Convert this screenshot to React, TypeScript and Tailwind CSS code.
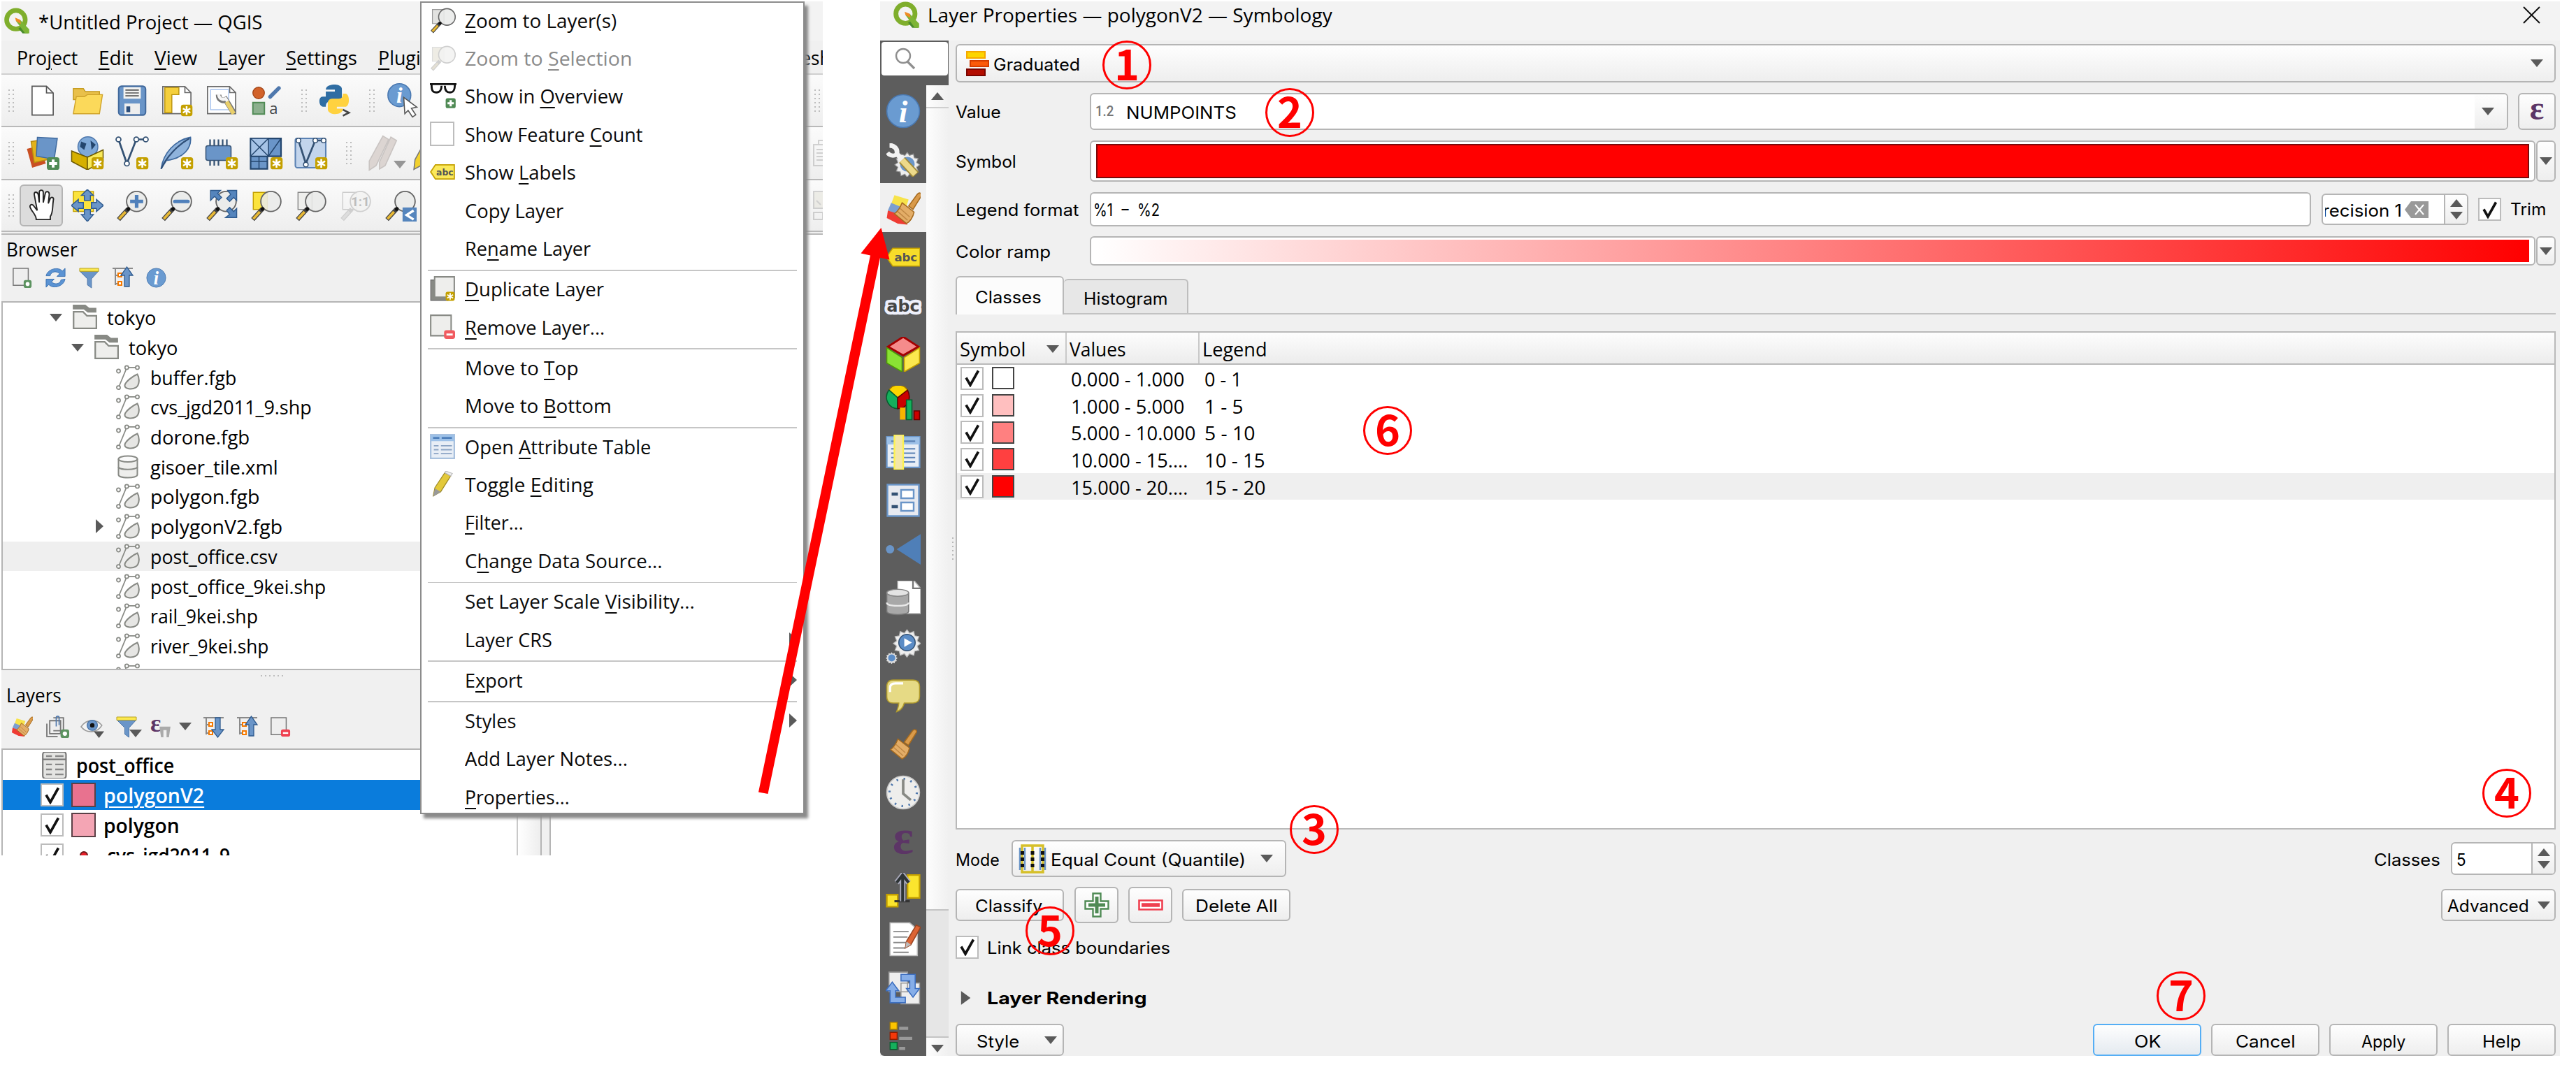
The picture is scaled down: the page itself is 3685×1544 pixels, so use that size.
import React, { useLayoutEffect, useRef, useState } from "react";

/* ---------- text helpers ---------- */

type TProps = { w: number; children: React.ReactNode; className?: string };

// A single line of text fitted to a given width.
function Fit({ w, children, className = "" }: TProps) {
  const ref = useRef<HTMLSpanElement>(null);
  const [k, setK] = useState(1);
  useLayoutEffect(() => {
    if (ref.current) setK(w / ref.current.offsetWidth);
  }, [w]);
  return (
    <span className={"inline-block shrink-0 whitespace-nowrap " + className} style={{ width: w }}>
      <span ref={ref} className="inline-block origin-left" style={{ transform: `scaleX(${k})` }}>
        {children}
      </span>
    </span>
  );
}

const Sg = (p: TProps) => (
  <Fit w={p.w} className={"font-['Open_Sans','Noto_Sans',sans-serif] text-[28px] leading-[38px] " + (p.className ?? "")}>
    {p.children}
  </Fit>
);
const Ui = (p: TProps) => (
  <Fit w={p.w} className={"font-['Inter','Noto_Sans_CJK_JP',sans-serif] text-[24px] leading-[30px] " + (p.className ?? "")}>
    {p.children}
  </Fit>
);

// "&" marks the mnemonic letter that is underlined.
function mnemonic(s: string) {
  const i = s.indexOf("&");
  if (i < 0) return s;
  return (
    <>
      {s.slice(0, i)}
      <span className="underline decoration-2 underline-offset-[5px]">{s[i + 1]}</span>
      {s.slice(i + 2)}
    </>
  );
}

/* ---------- small shapes ---------- */

const Svg = ({ s = 46, children, className = "" }: { s?: number; children?: React.ReactNode; className?: string }) => (
  <svg width={s} height={s} viewBox="0 0 32 32" fill="none" className={"shrink-0 " + className}>
    {children}
  </svg>
);
const Down = ({ className = "" }: { className?: string }) => (
  <svg width="18" height="11" viewBox="0 0 18 11" className={"shrink-0 " + className}>
    <path d="M0 0h18L9 11z" fill="#5a5a5a" />
  </svg>
);
const Up = () => (
  <svg width="18" height="11" viewBox="0 0 18 11" className="shrink-0">
    <path d="M0 11h18L9 0z" fill="#5a5a5a" />
  </svg>
);
const Right = ({ className = "" }: { className?: string }) => (
  <svg width="11" height="20" viewBox="0 0 11 20" className={"shrink-0 " + className}>
    <path d="M0 0v20L11 10z" fill="#5a5a5a" />
  </svg>
);
const Check = () => (
  <span className="flex h-[33px] w-[33px] shrink-0 items-center justify-center border-2 border-[#bcbcbc] bg-white">
    <svg width="24" height="26" viewBox="0 0 24 26">
      <path d="M3 12.5 9 23 20.5 2.5" fill="none" stroke="#111" strokeWidth="3.6" />
    </svg>
  </span>
);
const Grip = ({ className = "" }: { className?: string }) => (
  <span className={"grid shrink-0 grid-cols-2 gap-x-[4px] gap-y-[4px] " + className}>
    {Array.from({ length: 12 }, (_, i) => (
      <i key={i} className="h-[2px] w-[2px] bg-[#bdbdbd]" />
    ))}
  </span>
);
const Cell = ({ children }: { children: React.ReactNode }) => (
  <span className="flex w-16 shrink-0 items-center justify-center">{children}</span>
);

/* ---------- icon pieces ---------- */

const Star = () => (
  <g>
    <rect x="20" y="20" width="11.5" height="11.5" rx="2.4" fill="#c4a000" />
    <path d="M25.7 21.6v8.4M22 23.8l7.4 4.2M29.4 23.8 22 28" stroke="#fff" strokeWidth="1.7" />
  </g>
);
const PlusTag = ({ x = 20, y = 20 }: { x?: number; y?: number }) => (
  <g transform={`translate(${x} ${y})`}>
    <rect width="12" height="12" rx="2.4" fill="#4f8a54" />
    <path d="M6 2.2v7.6M2.2 6h7.6" stroke="#fff" strokeWidth="2.6" />
  </g>
);
const Lens = ({ handle = "#e8b935", dim = false }: { handle?: string; dim?: boolean }) => (
  <g>
    <path d="M12 19.5 2.5 30" stroke={dim ? "#cfcfcf" : "#444"} strokeWidth="4.4" />
    <path d="M9.5 22.3 3 29.4" stroke={handle} strokeWidth="2.6" />
    <circle cx="20.5" cy="12" r="10" fill={dim ? "#f3f3f1" : "#e9ebe9"} fillOpacity=".88" stroke={dim ? "#cfcfcf" : "#666"} strokeWidth="1.3" />
    {!dim && <circle cx="12.2" cy="19.5" r="1.9" fill="#111" />}
  </g>
);
const Info = ({ s }: { s: number }) => (
  <Svg s={s}>
    <circle cx="16" cy="16" r="15" fill="#6a9bd1" stroke="#4a78b0" />
    <text x="16" y="26.5" textAnchor="middle" fontFamily="Liberation Serif, serif" fontStyle="italic" fontWeight="700" fontSize="29" fill="#fff">i</text>
  </Svg>
);
const Epsilon = ({ className = "" }: { className?: string }) => (
  <span className={"font-['Liberation_Serif',serif] font-bold text-[#5c3566] " + className}>ε</span>
);
const QLogo = ({ s }: { s: number }) => (
  <Svg s={s}>
    <circle cx="15" cy="14.5" r="11.2" stroke="#7fae2c" strokeWidth="5.6" />
    <path d="M22 22.5 30 31H23l-5-6z" fill="#4a8b2c" />
    <path d="m15 16 5-1.5L31 26v5h-5z" fill="#7db535" />
    <path d="m14 12 6 2.5 1 5-6-3.5z" fill="#f08a24" />
  </Svg>
);
const Funnel = ({ s = 30 }: { s?: number }) => (
  <Svg s={s}>
    <path d="M2 6h28L19.5 17.5V31l-6-4.5V17.5z" fill="#6a95c8" stroke="#4a75a8" />
    <path d="M2 2h28v4.5H2z" fill="#fce94f" stroke="#b7a020" />
  </Svg>
);
const TreeArrow = ({ down = false }: { down?: boolean }) => (
  <Svg s={32}>
    <path d="M1 3h29M5 3v24M5 13h7M5 25h7" stroke="#8a8a8a" strokeWidth="2" />
    <path d="M9 10h5v5H9zM9 22h5v5H9z" fill="#fff" stroke="#f57900" strokeWidth="2" />
    <path d={down ? "M18 3h7v17h5l-8.500 11L13 20h5z" : "M18 29h7V13h5L21.500 1 13 13h5z"} fill="#6a95c8" stroke="#2f5b8f" strokeWidth="1.3" />
  </Svg>
);
const FileVec = () => (
  <Svg s={36}>
    <g stroke="#888a85" strokeWidth="1.5">
      <path d="M4.500 28 14 5M17 3.500h9" />
      <circle cx="4" cy="8" r="2.300" fill="#fff" />
      <circle cx="4" cy="29" r="2.300" fill="#fff" />
      <circle cx="14.500" cy="3.500" r="2.300" fill="#fff" />
      <circle cx="28" cy="3.500" r="2.300" fill="#fff" />
      <path d="M28 12c-5 2-15 9-16 14-.5 5 9 6 14 3 5-3 5-12 2-17z" fill="#e6e6e4" strokeWidth="1.800" />
    </g>
  </Svg>
);
const FileDb = () => (
  <Svg s={36}>
    <path d="M4 6v20c0 5 24 5 24 0V6" fill="#eeeeec" stroke="#888a85" strokeWidth="1.800" />
    <ellipse cx="16" cy="6" rx="12" ry="3.800" fill="#fafafa" stroke="#888a85" strokeWidth="1.800" />
    <path d="M4 16c0 4.500 24 4.500 24 0" stroke="#888a85" strokeWidth="1.800" />
  </Svg>
);
const Folder = () => (
  <Svg s={36}>
    <path d="M1 0h16l5 4h9v6H20l-5-4H1z" fill="#888a85" />
    <path d="M2 9h12l5 5h12v16H2z" fill="#eeeeec" stroke="#888a85" strokeWidth="2" />
  </Svg>
);
const Page = ({ children }: { children?: React.ReactNode }) => (
  <>
    <path d="M2 2h22l6 6v21H2z" fill="#fff" stroke="#6b6b6b" strokeWidth="1.200" />
    <path d="M24 2v6h6" stroke="#6b6b6b" strokeWidth="1.200" />
    {children}
  </>
);
const Brush = ({ palette = true }: { palette?: boolean }) => (
  <>
    {palette && (
      <>
        <path d="M8 4l13 4-3 9L5 12z" fill="#f7e34a" />
        <path d="M5 11l12 5-3 7L2 18z" fill="#7b9fd0" />
        <path d="M2 18l12 4 6 9-9-1L1 25z" fill="#ef3b33" />
      </>
    )}
    <path d="m21 14 8-11c2-2 5-.5 3.500 2L25 17z" fill="#d99a4a" stroke="#a56a1f" />
    <path d="M15 11 26 19.500c-1 5-4 9-7 10.500L8 21c3-2 5-5 7-10z" fill="#e3ad67" stroke="#a56a1f" />
    <path d="m11 19 9 8M13 16l9 8" stroke="#c08845" />
  </>
);

/* ---------- toolbars ---------- */

const rowOne = [
  <Svg s={44}><path d="M5 1h15l7 7v23H5z" fill="#fff" stroke="#555" strokeWidth="1.200" /><path d="M20 1v7h7" stroke="#555" strokeWidth="1.200" /></Svg>,
  <Svg s={46}><path d="M2 4h10l2 3h14v8H2z" fill="#e9c04a" stroke="#c59b1f" /><path d="M2 29 5 12h8l3-2h15l-3 19z" fill="#fbd95a" stroke="#d0a42a" /></Svg>,
  <Svg s={44}><rect x="2" y="1" width="28" height="30" rx="3" fill="#6a95c8" stroke="#41699c" strokeWidth="1.500" /><path d="M7 2h18v12H7z" fill="#f3f3f1" /><path d="M9 5h14M9 8h14M9 11h14" stroke="#555" strokeWidth="1.200" /><path d="M8 19h16v11H8z" fill="#eee" /><path d="M10 22h4v6h-4z" fill="#2b4d7a" /></Svg>,
  <Svg s={46}><Page /><path d="M4 3h14v7h-7v18H4z" fill="#f5cf3c" stroke="#b9930f" /><Star /></Svg>,
  <Svg s={46}><Page><path d="M5 5h18v20H5z" stroke="#a9c4ee" /></Page><path d="M13 10c0 5 4 7 7 5l8 13" stroke="#777" strokeWidth="5.500" /><path d="M13 9c0 5 4 7 7 5l2 3" stroke="#f5f5f5" strokeWidth="3" /><path d="m21 17 7 12" stroke="#e9cf6a" strokeWidth="4" /></Svg>,
  <Svg s={44}><circle cx="8" cy="8" r="6" fill="#d2622a" stroke="#a5481a" /><path d="M20 12 29 3" stroke="#4f78ad" strokeWidth="4" strokeLinecap="round" /><path d="M2 18h12v12H2z" fill="#8cb08e" stroke="#4f8a54" strokeWidth="1.400" /><text x="19" y="30" fontFamily="Open Sans, sans-serif" fontSize="16" fill="#444">a</text></Svg>,
];
const python = (
  <Svg s={46}>
    <path d="M8 14V9h9V7h-9c0-6 15-7 16-1v9c0 3-2 4-4 4h-8c-3 0-4 2-4 5H5c-4 0-5-10 0-10z" fill="#2f6da3" transform="translate(-1 -2)" />
    <path d="M25 9h3c4 1 4 12 0 13h-9v2h6c0 7-14 7-15 1v-7c0-2 2-4 4-4h7c3 0 4-2 4-5z" fill="#ffd23f" transform="translate(-1 0)" />
    <path d="m24 25 6 3-6 3" stroke="#444" strokeWidth="1.800" />
  </Svg>
);
const identify = (
  <Svg s={50}>
    <circle cx="13" cy="11" r="10.500" fill="#6a9bd1" stroke="#4a78b0" />
    <text x="13" y="18" textAnchor="middle" fontFamily="Liberation Serif, serif" fontStyle="italic" fontWeight="700" fontSize="20" fill="#fff">i</text>
    <path d="m17 13 12 9-5 1 4 6-3 2-4-6-3 3z" fill="#fff" stroke="#555" />
  </Svg>
);
const rowTwo = [
  <Svg s={48}><path d="m1 12 12-3 6 17-13 4z" fill="#c94f22" /><path d="m5 5 13-2 4 19-14 3z" fill="#e3b21a" stroke="#b98a10" /><path d="m11 1 19 1-3 20-17-3z" fill="#6a95c8" stroke="#3f6a9f" /><PlusTag x={20} y={20} /></Svg>,
  <Svg s={48}><circle cx="16.500" cy="10" r="9.500" fill="#7fa9d8" stroke="#4f78ad" /><path d="M10 5l5 2-2 6-4-3zM19 4l5 4-4 5z" fill="#24466e" /><path d="M1 14 16 20v12L1 24z" fill="#d6b000" stroke="#6e5a00" /><path d="m16 20 15-7v11l-15 8z" fill="#f8e95a" stroke="#6e5a00" /><Star /></Svg>,
  <Svg s={48}><path d="M3 3l8 23 9-23h9" stroke="#345274" strokeWidth="1.800" /><g fill="#fff" stroke="#345274" strokeWidth="1.200"><circle cx="3" cy="3" r="2.300" /><circle cx="20" cy="3" r="2.300" /><circle cx="29" cy="3" r="2.300" /><circle cx="11" cy="26" r="2.300" /></g><Star /></Svg>,
  <Svg s={48}><path d="M1 31C3 16 14 4 29 1c1 10-6 20-23 22z" fill="#8fb3dc" stroke="#3f6a9f" strokeWidth="1.200" /><path d="M1 31C6 20 16 9 28 2" stroke="#2f4f78" strokeWidth="1.400" /><Star /></Svg>,
  <Svg s={48}><path d="M5 9V3M9 9V3M13 9V3M17 9V3M21 9V3M5 28v-6M9 28v-6M13 28v-6" stroke="#345274" strokeWidth="1.500" /><rect x="1" y="9" width="24" height="14" rx="2" fill="#6a95c8" stroke="#345274" /><Star /></Svg>,
  <Svg s={48}><path d="M1 2h29v17H1zM1 19h16v12H1z" fill="#6a95c8" stroke="#24466e" strokeWidth="1.500" /><path d="M1 2h17v17H1z" fill="#a6c3e6" stroke="#24466e" /><path d="m1 2 17 17M18 2 1 19M18 19 30 2M9 19v12M1 24h16" stroke="#24466e" /><Star /></Svg>,
  <Svg s={48}><rect x="1" y="2" width="29" height="28" rx="2" fill="#c3d5ec" stroke="#5b82b4" strokeWidth="1.400" /><path d="M4 4l7 22 9-22h8" stroke="#345274" strokeWidth="1.800" /><g fill="#fff" stroke="#345274"><circle cx="4" cy="4" r="2.200" /><circle cx="20" cy="4" r="2.200" /><circle cx="28" cy="4" r="2.200" /><circle cx="11" cy="27" r="2.200" /></g><Star /></Svg>,
];
const rowThree = [
  <Svg s={46}><path d="M2 2h20v20H2z" fill="#fbe33c" stroke="#c4a000" /><g fill="#6a95c8" stroke="#2f5b8f"><path d="m16 0 6 6h-3v5h-6V6h-3zM16 32l6-7h-3v-5h-6v5h-3zM0 16l7-6v3h5v6H7v3zM32 16l-7-6v3h-5v6h5v3z" /></g></Svg>,
  <Svg s={46}><Lens /><path d="M20.500 5.500v13M14 12h13" stroke="#4f80bb" strokeWidth="3.600" /></Svg>,
  <Svg s={46}><Lens /><path d="M14 12h13" stroke="#4f80bb" strokeWidth="3.600" strokeLinecap="round" /></Svg>,
  <Svg s={46}><Lens /><g fill="#5585bd" stroke="#2f5b8f"><path d="M5 1h10l-3 3 4 4-3 3-4-4-4 4zM31 1v10l-3-3-4 4-3-3 4-4-3-4zM31 28H20l4-3-3-4 3-3 4 4 3-3z" /></g></Svg>,
  <Svg s={46}><path d="M3 3h14v17H3z" fill="#fbe33c" stroke="#c4a000" /><Lens /></Svg>,
  <Svg s={46}><path d="M3 3h14v17H3z" fill="#eeeeec" stroke="#888" /><Lens /></Svg>,
  <Svg s={46}><path d="M3 3h14v17H3z" stroke="#ccc" /><Lens dim handle="#ddd" /><text x="20.500" y="17" textAnchor="middle" fontFamily="Roboto, sans-serif" fontWeight="700" fontSize="13" fill="#bdbdbd">1:1</text></Svg>,
  <Svg s={46}><Lens /><path d="M18 18h14v14H18z" fill="#5585bd" /><path d="m29 21-7 4.500 7 4.500" stroke="#fff" strokeWidth="2.400" /></Svg>,
];

const menuBar: [string, number, string][] = [
  ["Pro&ject", 87, "ml-[22px]"],
  ["&Edit", 50, "ml-[30px]"],
  ["&View", 61, "ml-[30px]"],
  ["&Layer", 67, "ml-[30px]"],
  ["&Settings", 102, "ml-[30px]"],
  ["&Plugins", 90, "ml-[30px]"],
];

const toolRow = "flex items-center border-b-2 border-[#b9b9b9] bg-gradient-to-b from-[#fbfbfb] to-[#eeeeee]";

/* ---------- project window ---------- */

type File = { name: string; w: number; pad: string; kind?: "dir" | "db"; hot?: boolean; closed?: boolean };
const files: File[] = [
  { name: "tokyo", w: 70, pad: "pl-[67px]", kind: "dir" },
  { name: "tokyo", w: 70, pad: "pl-[98px]", kind: "dir" },
  { name: "buffer.fgb", w: 123, pad: "pl-[129px]" },
  { name: "cvs_jgd2011_9.shp", w: 231, pad: "pl-[129px]" },
  { name: "dorone.fgb", w: 142, pad: "pl-[129px]" },
  { name: "gisoer_tile.xml", w: 183, pad: "pl-[129px]", kind: "db" },
  { name: "polygon.fgb", w: 156, pad: "pl-[129px]" },
  { name: "polygonV2.fgb", w: 189, pad: "pl-[129px]", closed: true },
  { name: "post_office.csv", w: 182, pad: "pl-[129px]", hot: true },
  { name: "post_office_9kei.shp", w: 251, pad: "pl-[129px]" },
  { name: "rail_9kei.shp", w: 154, pad: "pl-[129px]" },
  { name: "river_9kei.shp", w: 169, pad: "pl-[129px]" },
  { name: "syukyo_9kei.shp", w: 190, pad: "pl-[129px]" },
];

function ProjectWindow() {
  return (
    <div className="absolute left-[2px] top-[2px] flex h-[1222px] w-[1175px] flex-col overflow-hidden bg-white">
      <div className="flex h-[56px] shrink-0 items-center bg-[#f3f3f3] pl-[3px]">
        <QLogo s={38} />
        <Sg w={320} className="ml-[12px] pt-[2px]">*Untitled Project — QGIS</Sg>
      </div>
      <div className="flex h-[49px] shrink-0 items-center border-b-2 border-[#cfcfcf] bg-[#f0f0f0]">
        {menuBar.map(([t, w, m]) => (
          <Sg key={t} w={w} className={m}>{mnemonic(t)}</Sg>
        ))}
        <span className="ml-auto flex w-[26px] justify-end overflow-hidden"><Sg w={66} className="-mr-[11px]">Mesh</Sg></span>
      </div>
      <div className={toolRow + " h-[75px] shrink-0"}>
        <Grip className="ml-[10px] mr-[9px]" />
        {rowOne.map((x, i) => <Cell key={i}>{x}</Cell>)}
        <Grip className="ml-[18px] mr-[8px]" />
        <Cell>{python}</Cell>
        <Grip className="ml-[17px] mr-[8px]" />
        <Cell>{identify}</Cell>
        <Grip className="ml-auto mr-[4px]" />
      </div>
      <div className={toolRow + " h-[76px] shrink-0"}>
        <Grip className="ml-[10px] mr-[9px]" />
        {rowTwo.map((x, i) => <Cell key={i}>{x}</Cell>)}
        <Grip className="ml-[18px] mr-[12px]" />
        <span className="flex w-[76px] items-end justify-center">
          <Svg s={52}><path d="m2 23 12-22 5 3L8 27l-6 4zM11 24 21 2l5 3-10 22-5 3z" fill="#dcd5d2" stroke="#c9c4c2" /></Svg>
          <Down className="-ml-[14px] mb-[4px] opacity-60" />
        </span>
        <Svg s={50} className="-ml-[2px]"><path d="M3 22 14 2l7 4-10 20-9 5z" fill="#f2d12e" stroke="#777" /></Svg>
        <span className="ml-auto w-[14px] overflow-hidden opacity-40">
          <svg width="30" height="38" viewBox="0 0 30 38" fill="none" stroke="#999" strokeWidth="2"><path d="M1 7h28v30H1zM8 7V1h12M5 14h20M5 19h20M5 24h20M5 29h20" /></svg>
        </span>
      </div>
      <div className={toolRow + " h-[74px] shrink-0"}>
        <Grip className="ml-[10px] mr-[8px]" />
        <span className="flex h-[60px] w-[62px] items-center justify-center rounded-md border-2 border-[#b4b4b4] bg-[#dcdcdc]">
          <Svg s={46}><path d="M9 30c0-5-4-7-6-12-1-3 2-4 4-1l3 4L7 5c0-3 3-3 4 0l1 8V3c0-3 4-3 4 0v10l2-9c1-3 4-2 4 1l-1 9 2-5c1-2 4-1 3 2-1 7 0 12-3 16v3z" fill="#fff" stroke="#222" strokeWidth="1.300" transform="translate(2 0)" /></Svg>
        </span>
        <span className="w-[3px]" />
        {rowThree.map((x, i) => <Cell key={i}>{x}</Cell>)}
        <span className="ml-auto w-[14px] overflow-hidden opacity-40">
          <svg width="30" height="42" viewBox="0 0 30 42" fill="none" stroke="#999" strokeWidth="2"><path d="M1 1h28v24H1z" fill="#dedccf" /><path d="M1 31h28v10H1zM14 31v10M5 14l6 6" /></svg>
        </span>
      </div>

      {/* docked panels */}
      <div className="flex min-h-0 flex-1 flex-col">
        <div className="h-[99px] w-full shrink-0">
          <div className="h-[4px] w-full border-b-2 border-[#b9b9b9] bg-[#f0f0f0]" />
          <div className="h-[95px] w-[600px] bg-[#f0f0f0]">
            <div className="flex h-[39px] items-center pl-[7px]"><Sg w={102}>Browser</Sg></div>
            <div className="flex h-[44px] items-center gap-[17px] pl-[15px]">
              <Svg s={30}><path d="M2 2h23v26H2z" fill="#eee" stroke="#777" strokeWidth="1.600" /><rect x="18" y="20" width="12" height="12" rx="3" fill="#5c9360" /><circle cx="24" cy="26" r="3" fill="#fff" /></Svg>
              <Svg s={31}><path d="M2 13C4 3 20-1 26 6l4-4v12H18l4-4C17 5 9 7 8 13zM30 18C28 29 12 33 6 26l-4 4V18h12l-4 4c5 5 13 3 14-3z" fill="#5b93d3" stroke="#3e74b3" /></Svg>
              <Funnel s={31} />
              <TreeArrow />
              <Info s={29} />
            </div>
          </div>
        </div>
        <div className="flex min-h-0 flex-1">
          <div className="flex w-[786px] shrink-0 flex-col bg-[#f0f0f0]">
            <div className="h-[528px] shrink-0 overflow-hidden border-y-2 border-l-2 border-[#b5b5b5] bg-white">
              {files.map((f, i) => (
                <div key={i} className={"flex h-[42.700px] items-center " + f.pad + (f.hot ? " bg-[#efefef]" : "")}>
                  <span className="flex w-[22px] shrink-0">
                    {f.kind === "dir" && <Down />}
                    {f.closed && <Right className="ml-[4px]" />}
                  </span>
                  <span className="ml-[10px] flex w-[50px]">
                    {f.kind === "dir" ? <Folder /> : f.kind === "db" ? <FileDb /> : <FileVec />}
                  </span>
                  <Sg w={f.w}>{f.name}</Sg>
                </div>
              ))}
            </div>
            <div className="flex h-[15px] items-center gap-[4px] pl-[371px]">
              {[0, 1, 2, 3, 4, 5].map((i) => <i key={i} className="h-[2px] w-[2px] bg-[#bdbdbd]" />)}
            </div>
            <div className="flex h-[40px] items-center pl-[7px]"><Sg w={79}>Layers</Sg></div>
            <div className="flex h-[57px] items-center pb-[6px] pl-[14px]">
              <span className="w-[50px]"><Svg s={31}><Brush /></Svg></span>
              <span className="w-[49px]"><Svg s={33}><path d="M1 12v18h15M5 8h15v18H5zM10 4h14v18H10" fill="#eee" stroke="#777" strokeWidth="1.800" /><path d="M14 16V4c0-3 4-3 4 0v10" stroke="#4f78ad" strokeWidth="1.600" /><rect x="20" y="20" width="12" height="12" rx="3" fill="#5c9360" /><circle cx="26" cy="26" r="3" fill="#fff" /></Svg></span>
              <span className="w-[50px]"><Svg s={34}><path d="M1 16C8 5 22 5 29 14c-6 10-20 12-28 2z" fill="#f4f4f4" stroke="#999" strokeWidth="1.500" /><circle cx="16" cy="14" r="7" fill="#6a95c8" stroke="#3f6a9f" /><circle cx="16" cy="14" r="3" fill="#111" /><path d="M18 22h14l-7 9z" fill="#555" /></Svg></span>
              <span className="flex w-[50px]"><Funnel s={32} /><Down className="-ml-[12px] mt-[20px]" /></span>
              <span className="flex w-[41px]">
                <Epsilon className="-mt-[6px] text-[36px] leading-[34px]" />
                <Svg s={18} className="-ml-[3px] mt-[14px]"><path d="M2 3h28l-4 27h-6V12h-8v18H6z" fill="#aaa" /></Svg>
              </span>
              <Down className="mr-[16px]" />
              <span className="w-[48px]"><TreeArrow down /></span>
              <span className="w-[48px]"><TreeArrow /></span>
              <Svg s={30}><path d="M2 2h23v26H2z" fill="#eee" stroke="#777" strokeWidth="1.600" /><rect x="17" y="20" width="14" height="11" rx="3" fill="#ef4050" /><path d="M20 25.500h8" stroke="#fff" strokeWidth="2.600" /></Svg>
            </div>
            <div className="flex min-h-0 flex-1 border-l-2 border-t-2 border-[#b5b5b5] bg-white">
              <div className="flex min-w-0 flex-1 flex-col overflow-hidden">
                <div className="flex h-[43px] shrink-0 items-center pl-[56px]">
                  <Svg s={38}><rect x="1" y="0" width="28" height="32" rx="3" fill="#e4e4e2" stroke="#777" strokeWidth="1.800" /><path d="M1 9h28" stroke="#777" strokeWidth="1.800" /><path d="M5 5h7M16 5h10M5 15h7M16 15h10M5 21h7M16 21h10M5 27h7M16 27h10" stroke="#888" strokeWidth="2" /></Svg>
                  <Sg w={140} className="ml-[11px] font-semibold">post_office</Sg>
                </div>
                <div className="flex h-[43px] shrink-0 items-center bg-[#0a7cdc] pl-[54px]">
                  <Check />
                  <i className="ml-[11px] h-[35px] w-[35px] border-2 border-[#5a4046] bg-[#e8728f]" />
                  <Sg w={144} className="ml-[11px] font-semibold text-white">
                    <span className="underline decoration-2 underline-offset-[5px]">polygonV2</span>
                  </Sg>
                </div>
                <div className="flex h-[43px] shrink-0 items-center pl-[54px]">
                  <Check />
                  <i className="ml-[11px] h-[35px] w-[35px] border-2 border-[#5a4046] bg-[#f4a5b4]" />
                  <Sg w={109} className="ml-[11px] font-semibold">polygon</Sg>
                </div>
                <div className="flex h-[43px] shrink-0 items-center pl-[54px]">
                  <Check />
                  <i className="ml-[23px] h-[12px] w-[12px] rounded-full border-2 border-[#6b1a1a] bg-[#e8202a]" />
                  <Sg w={176} className="ml-[27px] font-semibold">cvs_jgd2011_9</Sg>
                </div>
              </div>
              <div className="w-[34px] border-l-2 border-[#c9c9c9] bg-gradient-to-r from-white to-[#eee]" />
              <div className="w-[15px] border-x-2 border-[#b5b5b5] bg-[#f0f0f0]" />
            </div>
          </div>
          <div className="flex-1 bg-white" />
        </div>
      </div>
    </div>
  );
}

/* ---------- layer context menu ---------- */

const menuIcons: Record<string, React.ReactNode> = {
  zoom: <Svg s={38}><path d="M3 3h14v17H3z" fill="#e2e2e0" stroke="#999" /><Lens /></Svg>,
  zoomSel: <Svg s={38}><path d="M3 3h14v17H3z" fill="#eeece4" stroke="#ddd" /><Lens dim handle="#e4e0d4" /></Svg>,
  glasses: <Svg s={38}><path d="M0 2h32M2 3c0 8 2 9 6 9s6-3 6-8M18 4c0 5 2 8 6 8s6-2 6-9" stroke="#111" strokeWidth="2.400" /><PlusTag x={19} y={19} /></Svg>,
  box: <i className="block h-[35px] w-[35px] border-2 border-[#bdbdbd] bg-white" />,
  label: <Svg s={36}><path d="M1 16 7 7h24v18H7z" fill="#fbe95a" stroke="#c4a000" strokeWidth="1.600" /><text x="19" y="20" textAnchor="middle" fontFamily="DejaVu Sans, sans-serif" fontWeight="700" fontSize="11" fill="#555">abc</text></Svg>,
  dup: <Svg s={36}><path d="M1 5h22v26H1z" fill="#888a85" stroke="#666" /><path d="M6 1h25v26H6z" fill="#eeeeec" stroke="#888a85" strokeWidth="1.800" /><Star /></Svg>,
  remove: <Svg s={36}><path d="M1 1h26v26H1z" fill="#eeeeec" stroke="#888a85" strokeWidth="1.800" /><rect x="18" y="20" width="14" height="11" rx="3" fill="#f15b60" /><path d="M21 25.500h8" stroke="#fff" strokeWidth="2.600" /></Svg>,
  table: <Svg s={36}><path d="M1 1h30v30H1z" fill="#e8eef6" stroke="#a9c1de" strokeWidth="2" /><path d="M1 1h30v8H1z" fill="#9dc1e8" /><path d="M4 5h8M15 5h13" stroke="#4f80bb" strokeWidth="2.400" /><path d="M5 15h6M14 15h14M5 20h6M14 20h14M5 25h6M14 25h14" stroke="#8aa3c4" strokeWidth="1.700" /></Svg>,
  pencil: <Svg s={38}><path d="M6 20 18 2l7 4-12 19-9 5z" fill="#e3c93a" stroke="#9d8a25" /><path d="m6 21 7 4-9 6z" fill="#999" /><path d="m18 2 7 4 2-3-8-3z" fill="#eee" stroke="#bbb" /></Svg>,
};

type Item = { t: string; w: number; icon?: string; off?: boolean; sub?: boolean } | null;
const menuItems: Item[] = [
  { t: "&Zoom to Layer(s)", w: 217, icon: "zoom" },
  { t: "Zoom to &Selection", w: 239, icon: "zoomSel", off: true },
  { t: "Show in &Overview", w: 226, icon: "glasses" },
  { t: "Show Feature &Count", w: 254, icon: "box" },
  { t: "Show &Labels", w: 159, icon: "label" },
  { t: "Copy Layer", w: 141 },
  { t: "Re&name Layer", w: 180 },
  null,
  { t: "&Duplicate Layer", w: 199, icon: "dup" },
  { t: "&Remove Layer...", w: 200, icon: "remove" },
  null,
  { t: "Move to &Top", w: 163 },
  { t: "Move to &Bottom", w: 210 },
  null,
  { t: "Open &Attribute Table", w: 266, icon: "table" },
  { t: "Toggle &Editing", w: 184, icon: "pencil" },
  { t: "&Filter...", w: 84 },
  { t: "C&hange Data Source...", w: 282 },
  null,
  { t: "Set Layer Scale &Visibility...", w: 329 },
  { t: "Layer CRS", w: 125, sub: true },
  null,
  { t: "E&xport", w: 83, sub: true },
  null,
  { t: "Styles", w: 74, sub: true },
  { t: "Add Layer Notes...", w: 233 },
  { t: "&Properties...", w: 150 },
];

function ContextMenu() {
  return (
    <div className="absolute left-[601px] top-[2px] flex h-[1163px] w-[550px] flex-col border-2 border-[#8c8c8c] bg-white shadow-[5px_6px_4px_#8a8a8a]">
      {menuItems.map((m, i) =>
        m === null ? (
          <div key={i} className="mx-[9px] my-[1px] h-[1.900px] shrink-0 bg-[#c6c6c6]" />
        ) : (
          <div key={i} className="flex h-[54.400px] shrink-0 items-center pb-[5px]">
            <span className="ml-[12px] flex w-[50px] items-center">{m.icon && menuIcons[m.icon]}</span>
            <Sg w={m.w} className={m.off ? "text-[#8a8a8a]" : "text-[#0a0a0a]"}>{mnemonic(m.t)}</Sg>
            {m.sub && <Right className="ml-auto mr-[9px]" />}
          </div>
        ),
      )}
    </div>
  );
}

/* ---------- layer properties dialog ---------- */

const gear = "M16 1l3 4 5-2 1 5 5 1-2 5 4 3-4 3 2 5-5 1-1 5-5-2-3 4-3-4-5 2-1-5-5-1 2-5-4-3 4-3-2-5 5-1 1-5 5 2z";
const sideIcons: React.ReactNode[] = [
  <Info s={50} />,
  <Svg s={48}><path d={gear} fill="#eee" stroke="#999" transform="translate(8 8) scale(.74)" /><circle cx="20" cy="20" r="7" fill="#6a95c8" /><path d="M3 2c4 0 8 3 7 8l6 7" stroke="#f2f2f2" strokeWidth="4.500" /><path d="M1 9c3 4 8 3 9 1" stroke="#f2f2f2" strokeWidth="4" /><path d="m15 16 13 14" stroke="#a08a3a" strokeWidth="8" /><path d="m15 16 12.500 13.500" stroke="#ecd98a" strokeWidth="5.600" /></Svg>,
  <Svg s={50}><Brush /></Svg>,
  <Svg s={48}><path d="M0 16 6 7.500h26v17H6z" fill="#f7dc2a" stroke="#c4a000" /><text x="18.500" y="20" textAnchor="middle" fontFamily="DejaVu Sans, sans-serif" fontWeight="700" fontSize="11" fill="#555">abc</text></Svg>,
  <Svg s={54}><text x="16" y="20.500" textAnchor="middle" fontFamily="DejaVu Sans, sans-serif" fontWeight="700" fontSize="14" fill="#444" stroke="#eef0fb" strokeWidth="5" strokeLinejoin="round" paintOrder="stroke">abc</text></Svg>,
  <Svg s={50}><path d="M16 0 30 9 16 17 2 9z" fill="#f58b8b" stroke="#a40000" strokeWidth="1.800" /><path d="M1 10 15 19v13L1 24z" fill="#8ae234" stroke="#4e9a06" /><path d="m31 10-14 9v13l14-8z" fill="#fce94f" stroke="#c4a000" /></Svg>,
  <Svg s={50}><path d="M11 11 3 4a10 10 0 0 1 17 0z" fill="#fcd500" stroke="#a07800" /><path d="M11 11v10A10.500 10.500 0 0 1 3 4z" fill="#14b05c" stroke="#075d2e" /><path d="M11 11l9-7c4 8 0 17-9 17z" fill="#c00" stroke="#600" /><path d="M13 20h5v11h-5z" fill="#f5b400" /><path d="M19 13h5v18h-5z" fill="#14b05c" stroke="#075d2e" /><path d="M26 23h5v8h-5z" fill="#c00" stroke="#600" /></Svg>,
  <Svg s={50}><path d="M1 2h30v28H1z" fill="#e8eef6" stroke="#6a95c8" strokeWidth="1.500" /><path d="M1 2h30v7H1z" fill="#9dc1e8" /><path d="M5 6h22M5 13h22M5 17h22M5 21h22M5 25h22" stroke="#5b82b4" strokeWidth="1.300" /><path d="M8 0h8v32H8z" fill="#f3e6a8" stroke="#fcf14f" strokeWidth="1.500" /></Svg>,
  <Svg s={48}><path d="M1 1h30v30H1z" fill="#e8eaf0" stroke="#6a95c8" strokeWidth="1.600" /><path d="M14 6h12v8H14zM14 18h12v8H14z" fill="#fff" stroke="#6a95c8" strokeWidth="1.600" /><path d="M5 10h6M5 22h6" stroke="#345274" strokeWidth="3" /></Svg>,
  <Svg s={50}><circle cx="4" cy="16" r="3.800" fill="#6a95c8" /><path d="M10 16 32 2v28z" fill="#4f7fb8" /></Svg>,
  <Svg s={50}><path d="M11 0h15l6 7v23H11z" fill="#fff" stroke="#bbb" /><path d="M25 0v7h7" stroke="#777" strokeWidth="1.500" /><path d="M1 11v17c0 4 20 4 20 0V11" fill="#a8a8a8" stroke="#777" /><ellipse cx="11" cy="11" rx="10" ry="3.200" fill="#e4e4e4" stroke="#888" /><path d="M1 20c0 4 20 4 20 0" stroke="#e8e8e8" strokeWidth="1.500" /></Svg>,
  <Svg s={50}><path d={gear} fill="#eee" stroke="#bbb" transform="translate(7 0) scale(.78)" /><circle cx="19.500" cy="12.500" r="7.500" fill="#5b8cc6" stroke="#345274" /><path d="m17 8.500 7 4-7 4z" fill="#fff" /><path d={gear} fill="#ddd" transform="translate(0 21) scale(.34)" /><circle cx="5.500" cy="26.500" r="3.200" fill="#5b8cc6" /></Svg>,
  <Svg s={50}><path d="M7 2h18c4 0 6 2 6 6v9c0 4-2 6-6 6h-8c-1 4-4 7-7 8 1-3 2-5 2-8H7c-4 0-6-2-6-6V8c0-4 2-6 6-6z" fill="#e6da85" stroke="#b09a2c" /><path d="M4 13V9c0-3 2-4 5-4h7" stroke="#fff" strokeWidth="2" /></Svg>,
  <Svg s={48}><g transform="translate(-4 0)"><Brush palette={false} /></g></Svg>,
  <Svg s={50}><circle cx="16" cy="16" r="15" fill="#eeeeec" stroke="#ccc" /><circle cx="16" cy="16" r="12.500" stroke="#4f78ad" strokeWidth="2" strokeDasharray="1.500 5.040" /><path d="M16 4v13l7 6" stroke="#888a85" strokeWidth="2.400" /></Svg>,
  <Epsilon className="-mt-3 text-[70px] leading-[50px]" />,
  <Svg s={50}><path d="M1 20h10v11H1zM20 2h11v21H20z" fill="#fbe52e" stroke="#c4a000" strokeWidth="1.500" /><path d="M8 26h14" stroke="#333" strokeWidth="2" /><path d="M15.500 26V4M10 9l5.500-7L21 9" stroke="#aab" strokeWidth="5" /><path d="M15.500 26V4M10 9l5.500-7L21 9" stroke="#2e3436" strokeWidth="2.600" /></Svg>,
  <Svg s={50}><path d="M4 1h18l7 6v24H4z" fill="#fff" stroke="#bbb" /><path d="M7 9h14M7 14h13M7 19h12M7 24h11M7 28h14" stroke="#888" strokeWidth="1.200" /><path d="m28 3 4 2-9 16-5 3 1-6z" fill="#dd6434" stroke="#9a4420" /><path d="m18 24 1-6 4 3z" fill="#bbb" /></Svg>,
  <Svg s={50}><path d="M3 2h17v18H3zM14 12h17v19H14z" fill="#eee" stroke="#999" /><path d="M14 4h13v13h4l-6 8-6-8h3V10h-8zM18 30H4V19H0l6-8 6 8H9v6h9z" fill="#86aee8" stroke="#3d6fc0" /></Svg>,
  <Svg s={46}><path d="M3 2h7v7H3z" fill="#fcc400" stroke="#a67c00" /><path d="M3 12h7v7H3z" fill="#f4380a" stroke="#8e1c00" /><path d="M3 22h7v7H3z" fill="#14b05c" stroke="#075d2e" /><path d="M12 8h9M12 18h13M12 28h6" stroke="#999" strokeWidth="3" /></Svg>,
];

const btn = "flex shrink-0 items-center justify-center rounded-[6px] border-2 border-[#b5b5b5] bg-gradient-to-b from-[#fefefe] to-[#eeeeee]";
const field = "flex shrink-0 items-center rounded-[6px] border-2 border-[#b5b5b5] bg-white";

const Spin = () => (
  <span className="ml-auto flex h-full w-[33px] shrink-0 flex-col items-center justify-center gap-[7px] border-l-2 border-[#b5b5b5] bg-gradient-to-b from-[#fefefe] to-[#eeeeee]">
    <Up />
    <Down />
  </span>
);
const Label = ({ w, children }: TProps) => (
  <span className="flex w-[192px] shrink-0 pt-[3px]"><Ui w={w}>{children}</Ui></span>
);

const classes = [
  { c: "bg-white", v: "0.000 - 1.000", vw: 162, l: "0 - 1", lw: 54 },
  { c: "bg-[#ffbfbf]", v: "1.000 - 5.000", vw: 162, l: "1 - 5", lw: 56 },
  { c: "bg-[#ff8080]", v: "5.000 - 10.000", vw: 178, l: "5 - 10", lw: 73 },
  { c: "bg-[#ff4040]", v: "10.000 - 15....", vw: 167, l: "10 - 15", lw: 87 },
  { c: "bg-[#ff0000]", v: "15.000 - 20....", vw: 167, l: "15 - 20", lw: 88 },
];

function PropertiesDialog() {
  return (
    <div className="absolute left-[1259px] top-[2px] flex h-[1509px] w-[2403px] flex-col bg-[#f0f0f0]">
      <div className="flex h-[56px] shrink-0 items-start bg-[#f3f3f3] pl-[18px]">
        <QLogo s={39} />
        <Sg w={579} className="ml-[11px]">Layer Properties — polygonV2 — Symbology</Sg>
        <svg width="25" height="25" viewBox="0 0 25 25" className="ml-auto mr-[28px] mt-[7px]">
          <path d="M1 1 24 24M24 1 1 24" stroke="#111" strokeWidth="2" />
        </svg>
      </div>
      <div className="flex min-h-0 flex-1">
        {/* page list */}
        <div className="flex w-[98px] shrink-0 flex-col">
          <div className="h-[64px] w-full shrink-0 bg-[#5d5d5d] pl-[2px] pr-[1px] pt-[2px]">
            <div className="flex h-[48px] items-center rounded-[4px] bg-white pl-[18px]">
              <Svg s={32}><circle cx="13" cy="12" r="10" stroke="#8f8f8f" strokeWidth="2.400" /><path d="m19 20 10 10" stroke="#8f8f8f" strokeWidth="3.200" /></Svg>
            </div>
          </div>
          <div className="flex min-h-0 flex-1">
            <div className="flex w-[66px] shrink-0 flex-col rounded-bl-[6px] bg-[#5d5d5d] pt-[1px]">
              {sideIcons.map((ic, i) => (
                <div key={i} className={"flex h-[69.700px] shrink-0 items-center justify-center pt-[2px] " + (i === 2 ? "bg-[#f0f0f0]" : "")}>
                  {ic}
                </div>
              ))}
            </div>
            <div className="flex w-[32px] flex-col items-center bg-gradient-to-r from-[#fdfdfd] to-[#f0f0f0]">
              <div className="flex h-[33px] w-full items-center justify-center border-b-2 border-[#cfcfcf]"><Up /></div>
              <div className="flex-1" />
              <div className="h-[184px] w-full border-y-2 border-[#c4c4c4] bg-[#e6e6e6]" />
              <div className="flex h-[26px] w-full items-center justify-center pt-[4px]"><Down /></div>
            </div>
          </div>
        </div>
        <div className="flex w-[10px] shrink-0 flex-col items-center justify-center gap-[4px] pl-[2px]">
          {[0, 1, 2, 3, 4, 5].map((i) => <i key={i} className="h-[2px] w-[2px] bg-[#b8b8b8]" />)}
        </div>

        {/* symbology page */}
        <div className="flex w-[2289px] shrink-0 flex-col">
          <div className={btn + " mt-[5px] h-[55px] !justify-start pl-[13px]"}>
            <svg width="33" height="36" viewBox="0 0 33 36">
              <path d="M1 1h26v9H1z" fill="#fcd500" stroke="#f5a800" strokeWidth="2" />
              <path d="M6 14h26v8H6z" fill="#fb5a0a" stroke="#d33c00" strokeWidth="2" />
              <path d="M1 26h26v9H1z" fill="#b30d00" stroke="#7a0500" strokeWidth="2" />
            </svg>
            <Ui w={124} className="ml-[6px] pt-[5px]">Graduated</Ui>
            <Down className="ml-auto mr-[16px]" />
          </div>

          <div className="mt-[15px] flex h-[53px] shrink-0 items-center">
            <Label w={65}>Value</Label>
            <div className={field + " h-full w-[2029px] overflow-hidden"}>
              <Fit w={26} className="ml-[6px] pb-[2px] font-['Roboto',sans-serif] text-[20px] font-medium text-[#777]">1.2</Fit>
              <Ui w={158} className="ml-[18px] pt-[4px]">NUMPOINTS</Ui>
              <span className="ml-auto flex h-full w-[46px] items-center bg-gradient-to-b from-[#fefefe] to-[#eeeeee] pl-[10px]"><Down /></span>
            </div>
            <div className={btn + " ml-auto h-full w-[54px]"}><Epsilon className="-mt-[10px] text-[48px] leading-[40px]" /></div>
          </div>

          <div className="mt-[15px] flex h-[59px] shrink-0 items-center">
            <Label w={87}>Symbol</Label>
            <div className={field + " h-full w-[2068px] px-[7px]"}>
              <div className="h-[49px] w-full border-2 border-[#7a0a0a] bg-[#ff0000]" />
            </div>
            <div className={btn + " ml-auto h-full w-[28px]"}><Down /></div>
          </div>

          <div className="mt-[15px] flex h-[49px] shrink-0 items-center">
            <Label w={176}>Legend format</Label>
            <div className={field + " h-full w-[1747px] pl-[3px] pt-[3px]"}><Ui w={95} className="[word-spacing:8px]">%1 – %2</Ui></div>
            <div className={field + " ml-[15px] h-[45px] w-[210px] overflow-hidden"}>
              <span className="ml-[3px] flex w-[110px] justify-end overflow-hidden pt-[4px]"><Ui w={130}>Precision 1</Ui></span>
              <svg width="34" height="24" viewBox="0 0 34 24" className="ml-[4px]">
                <path d="M0 12 9 0h25v24H9z" fill="#999" />
                <path d="m15 5 12 14M27 5 15 19" stroke="#fff" strokeWidth="2" />
              </svg>
              <Spin />
            </div>
            <span className="ml-[14px] flex"><Check /></span>
            <Ui w={51} className="ml-[13px]">Trim</Ui>
          </div>

          <div className="mt-[14px] flex h-[42px] shrink-0 items-center">
            <Label w={136}>Color ramp</Label>
            <div className={field + " h-full w-[2068px] px-[7px]"}>
              <div className="h-[32px] w-full bg-[linear-gradient(to_right,#ffffff,#ff0000)]" />
            </div>
            <div className={btn + " ml-auto h-full w-[28px]"}><Down /></div>
          </div>

          <div className="mt-[15px] flex h-[55px] shrink-0 items-end border-b-2 border-[#c2c2c2]">
            <div className="-mb-[2px] flex h-[55px] w-[155px] items-center rounded-t-[6px] border-x-2 border-t-2 border-[#b9b9b9] bg-[#fcfcfc] pl-[26px] pt-[5px]"><Ui w={95}>Classes</Ui></div>
            <div className="flex h-[49px] w-[178px] items-center rounded-t-[6px] border-r-2 border-t-2 border-[#bdbdbd] bg-[#e7e7e7] pl-[28px] pt-[7px]"><Ui w={121}>Histogram</Ui></div>
          </div>

          <div className="mt-[24px] flex h-[713px] shrink-0 flex-col border-2 border-[#b9b9b9] bg-white">
            <div className="flex h-[46px] shrink-0 items-stretch border-b-2 border-[#b9b9b9] bg-gradient-to-b from-[#fdfdfd] to-[#ececec]">
              <div className="flex w-[157px] items-center border-r-2 border-[#c9c9c9] pl-[4px] pt-[2px]">
                <Sg w={94}>Symbol</Sg>
                <Down className="ml-[30px]" />
              </div>
              <div className="flex w-[190px] items-center border-r-2 border-[#c9c9c9] pl-[4px] pt-[2px]"><Sg w={81}>Values</Sg></div>
              <div className="flex items-center pl-[4px] pt-[2px]"><Sg w={93}>Legend</Sg></div>
            </div>
            {classes.map((r, i) => (
              <div key={i} className={"flex h-[38.700px] shrink-0 items-center pl-[5px] " + (i === 4 ? "bg-[#efefef]" : "")}>
                <Check />
                <i className={"ml-[12px] h-[32px] w-[32px] border-2 border-[#444] " + r.c} />
                <span className="ml-[81px] flex w-[191px] pt-[1px]"><Sg w={r.vw}>{r.v}</Sg></span>
                <span className="flex pt-[1px]"><Sg w={r.lw}>{r.l}</Sg></span>
              </div>
            ))}
          </div>

          <div className="mt-[15px] flex h-[53px] shrink-0 items-center">
            <span className="flex w-[80px] pt-[5px]"><Ui w={63}>Mode</Ui></span>
            <div className={btn + " h-full w-[393px] !justify-start pl-[8px]"}>
              <svg width="40" height="42" viewBox="0 0 40 42" fill="none">
                <path d="M5 2h30v38H5zM20 2v38" stroke="#d6c02a" strokeWidth="3.500" />
                <path d="M2 5v32M9 5v32M31 5v32M38 5v32" stroke="#6a95c8" strokeWidth="2.500" />
                <path d="M5.500 10v24M20 10v24M34.500 10v24" stroke="#111" strokeWidth="5" strokeDasharray="5 4" />
              </svg>
              <Ui w={279} className="ml-[6px] pt-[5px]">Equal Count (Quantile)</Ui>
              <Down className="ml-auto mr-[17px]" />
            </div>
            <span className="ml-auto flex pt-[5px]"><Ui w={95}>Classes</Ui></span>
            <div className={field + " ml-[15px] h-[47px] w-[150px] overflow-hidden"}>
              <Ui w={14} className="ml-[6px] pt-[4px]">5</Ui>
              <Spin />
            </div>
          </div>

          <div className="mt-[14px] flex h-[52px] shrink-0 items-center">
            <div className={btn + " h-[46px] w-[155px] !justify-start pl-[26px] pt-[4px]"}><Ui w={96}>Classify</Ui></div>
            <div className={btn + " ml-[15px] h-full w-[63px]"}>
              <svg width="36" height="36" viewBox="0 0 36 36"><path d="M12.500 1.500h11v11h11v11h-11v11h-11v-11h-11v-11h11z" fill="#fff" stroke="#4f8a54" strokeWidth="2.400" /><path d="M18 6v24M6 18h24" stroke="#4f8a54" strokeWidth="5" /></svg>
            </div>
            <div className={btn + " ml-[14px] h-full w-[63px]"}>
              <svg width="36" height="16" viewBox="0 0 36 16"><path d="M1.500 1.500h33v13h-33z" fill="#fff" stroke="#ef4050" strokeWidth="2.600" /><path d="M5 8h26" stroke="#ef4050" strokeWidth="5.500" /></svg>
            </div>
            <div className={btn + " ml-[14px] h-[46px] w-[155px] pt-[4px]"}><Ui w={118}>Delete All</Ui></div>
            <div className={btn + " ml-auto h-[46px] w-[164px]"}>
              <Ui w={117} className="pt-[4px]">Advanced</Ui>
              <Down className="ml-[12px]" />
            </div>
          </div>

          <div className="mt-[17px] flex h-[34px] shrink-0 items-center">
            <Check />
            <Ui w={262} className="ml-[12px] pt-[3px]">Link class boundaries</Ui>
          </div>

          <div className="mt-[36px] flex h-[40px] shrink-0 items-center pl-[9px]">
            <Right className="scale-x-125" />
            <Ui w={229} className="ml-[25px] pt-[2px] font-bold">Layer Rendering</Ui>
          </div>

          <div className="mt-auto flex h-[46px] shrink-0 items-center">
            <div className={btn + " h-full w-[155px] !justify-start pl-[28px]"}>
              <Ui w={61} className="pt-[5px]">Style</Ui>
              <Down className="ml-auto mr-[8px]" />
            </div>
            <div className="ml-auto flex h-full gap-[14px]">
              <div className={btn + " w-[155px] !border-[#55aef5] !to-[#e4eaf0] pt-[5px]"}><Ui w={38}>OK</Ui></div>
              <div className={btn + " w-[155px] pt-[5px]"}><Ui w={86}>Cancel</Ui></div>
              <div className={btn + " w-[155px] pt-[5px]"}><Ui w={63}>Apply</Ui></div>
              <div className={btn + " w-[155px] pt-[5px]"}><Ui w={55}>Help</Ui></div>
            </div>
          </div>
        </div>
      </div>
    </div>
  );
}

/* ---------- annotations ---------- */

const badges: [string, string][] = [
  ["1", "left-[1577px] top-[58px]"],
  ["2", "left-[1810px] top-[126px]"],
  ["3", "left-[1845px] top-[1152px]"],
  ["4", "left-[3551px] top-[1100px]"],
  ["5", "left-[1467px] top-[1297px]"],
  ["6", "left-[1950px] top-[581px]"],
  ["7", "left-[3085px] top-[1390px]"],
];

export default function App() {
  return (
    <div className="relative h-[1544px] w-[3685px] overflow-hidden bg-white text-black">
      <ProjectWindow />
      <ContextMenu />
      <PropertiesDialog />
      {badges.map(([n, pos]) => (
        <div key={n} className={"absolute flex h-[70px] w-[70px] items-center justify-center rounded-full border-[3px] border-[#ff0000] " + pos}>
          <span className="pb-[9px] font-['Noto_Sans_CJK_JP',sans-serif] text-[61px] font-bold leading-none text-[#ff0000]">{n}</span>
        </div>
      ))}
      <svg width="200" height="830" viewBox="1080 316 200 830" className="absolute left-[1080px] top-[316px]">
        <path d="M1085 1133.500 1245 365.500 1231.500 362.500 1260.500 326 1272.500 371.500 1259 368.800 1098.500 1136z" fill="#ff0000" />
      </svg>
    </div>
  );
}
